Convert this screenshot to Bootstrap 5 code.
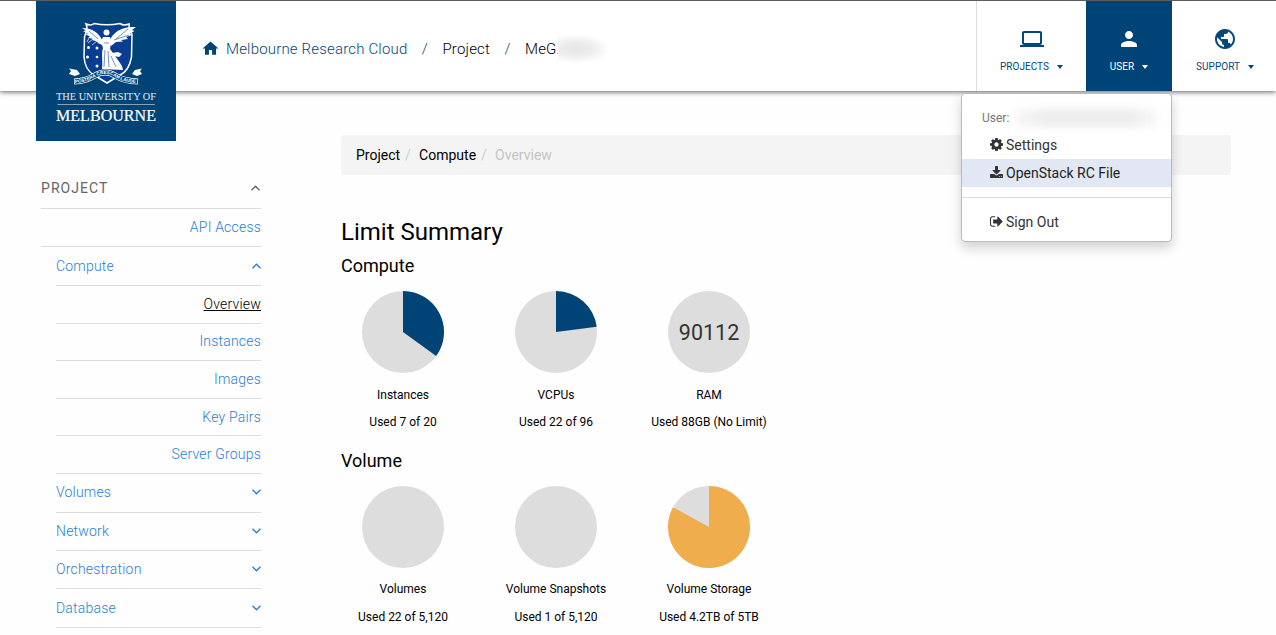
<!DOCTYPE html>
<html lang="en">
<head>
<meta charset="utf-8">
<meta name="viewport" content="width=device-width, initial-scale=1">
<title>Overview - Melbourne Research Cloud</title>
<link href="https://cdn.jsdelivr.net/npm/bootstrap@5.3.0/dist/css/bootstrap.min.css" rel="stylesheet">
<style>
  body { font-family: Roboto, "Liberation Sans", sans-serif; color: #000; background: #fefefe; height: 635px; overflow: hidden; font-size: 14px; line-height: 20px; }
  a { text-decoration: none; }
  .site-header { height: 91px; border-top: 1px solid #5c5c60; background: #fff; box-shadow: 0 1px 5px rgba(0,0,0,.62); z-index: 5; }
  .uni-logo { width: 140px; height: 140px; margin-left: 36px; background: #004477; }
  .trail { margin-left: 25px; height: 96px; font-size: 15px; font-weight: 300; letter-spacing: .18px; color: #000; }
  .trail a, .trail .sep { color: #04477b; }
  .trail a svg { margin-right: 6px; margin-bottom: 2px; }
  .trail .sep { width: 35px; text-align: center; }
  .redacted { display: inline-block; background: radial-gradient(ellipse 34px 15px at 18px 50%, #e6e6e6, #ececec 45%, #f8f8f8 80%, #fff); margin-left: -2px; }
  .redacted.wide { background: linear-gradient(90deg, #f8f8f8, #ededed 20%, #ededed 80%, #f8f8f8); filter: blur(4px); margin-left: 6px; }
  .tools { height: 90px; border-left: 1px solid #ddd; }
  .tool { color: #04477b; font-size: 10px; line-height: 14px; padding-top: 26px; letter-spacing: .03px; }
  .tool svg { fill: #04477b; }
  .tool span { margin-top: 9px; }
  .tool.current { background: #004477; color: #fff; }
  .tool.current svg { fill: #fff; }
  .caret { border: 3.5px solid transparent; border-top: 4px solid currentColor; border-bottom: 0; margin-left: 8px; }
  .user-menu { position: absolute; top: 92px; left: 961px; width: 211px; height: 149px; border: 1px solid #bbb; border-radius: 4px; background: #fff; box-shadow: 0 6px 12px rgba(0,0,0,.18); padding: 11px 0 0; }
  .user-menu .who { height: 26px; padding-left: 20px; font-size: 12px; line-height: 26px; color: #777; }
  .user-menu .entry { height: 28px; padding-left: 28px; color: #333; line-height: 28px; gap: 3px; }
  .user-menu .entry svg { fill: #333; width: 13px; height: 13px; margin-bottom: 1px; }
  .user-menu .picked { background: #e1e8f3; color: #222; }
  .user-menu .rule { height: 1px; background: #ddd; margin: 10px 0; }
  .side { width: 220px; margin-left: 41px; padding-top: 78px; font-size: 14px; font-weight: 300; letter-spacing: .2px; }
  .side a, .side .head { border-bottom: 1px solid #ddd; color: #2a7fd3; height: 38.45px; padding-bottom: 1px; }
  .side .head { height: 40px; color: #666; letter-spacing: 1.05px; font-weight: 400; }
  .side .head svg { margin-right: 1px; }
  .side .leaf { height: 37.65px; padding-bottom: 1px; }
  .side .sub { margin-left: 15px; }
  .side svg { fill: none; stroke: currentColor; stroke-width: 1.4; width: 9px; height: 6px; }
  .main-area { width: 890px; margin-left: 80px; padding-top: 44px; }
  .crumbs { height: 40px; background: #f4f4f4; border-radius: 4px; padding-left: 15px; }
  .crumbs .sep { color: #ccc; margin: 0 9px 0 5px; width: 5px; }
  .page-title { font-size: 24px; line-height: 28px; margin: 43px 0 0; font-weight: 400; }
  .group-title { font-size: 18px; line-height: 22px; margin: 9px 0 0; font-weight: 400; }
  .group-title.second { margin-top: 11px; }
  .gauge { width: 153px; padding-right: 29px; font-size: 12px; }
  .gauge svg { width: 82px; height: 82px; margin: 14px 1px 12px 0; }
  .gauge div { line-height: 20px; margin-bottom: 7px; white-space: nowrap; }
  .second + div .gauge svg { margin-bottom: 11px; }
  .second + div .gauge div { margin-bottom: 8px; }
</style>
</head>
<body>
<header class="site-header d-flex align-items-start position-relative">
  <a href="#" class="uni-logo flex-shrink-0">
    <svg width="140" height="140" viewBox="0 0 140 140">
      <path d="M50 23Q55 25 58 22.500Q71 25 84 22.500Q88 25 93 23Q93 29 96 33L95.500 56Q93 70 84 74L71 82L58 74Q49 69 48 56L48.500 36L50 31Q52 27 50 23Z" fill="#083d91" stroke="#fff" stroke-width="1.500"/>
      <g fill="#fff">
        <path d="M67 41C64 33 57 27 46 27L50 29.500 47 30 52 32.500 49 33 54 35.500 52 36.500 57 38 56 39 61 40.500 62 42 66 44Z"/>
        <path d="M73 41C77 30 87 25 100 26L96 29 98.500 30 94 32.500 96 34 90 36 92 38 85 39 87 40.500 80 41 75 45Z"/>
        <circle cx="70.500" cy="31.500" r="3"/>
        <path d="M67 36L74 36 75 42 74 48C78 53 82 59 86 65L87 69 66 68C67 59 65 52 67 47L65 41Z"/>
        <path d="M76 52L82 51 86 53 83 56 78 55Z"/>
        <circle cx="52.500" cy="46.500" r="1.500"/><circle cx="61" cy="47" r="1.500"/><circle cx="51.500" cy="56" r="1.500"/><circle cx="61" cy="56" r="1.300"/><circle cx="61" cy="65" r="1.500"/>
      </g>
      <path d="M69 49L68 66M72 50L73 66M75 55L80 66M62 38L53 30M80 38L92 28M78 39L93 34M68 42H73" stroke="#124b90" stroke-width=".6"/>
      <path d="M57 38L52 42M61 40L56 44M53 37L51 41" stroke="#dce8f4" stroke-width=".8" fill="none"/>
      <path d="M33 67.500L41 69 44 73 39 75 33 73 35 70ZM106 67.500L99 69 96 73 101 75 106 73 104 70Z" fill="#fff"/>
      <path d="M38 80.500Q50 80 58 75Q69 68 80 75Q88 80 102 80.500" fill="none" stroke="#fff" stroke-width="6"/>
      <path d="M38.700 80.500Q50 80 58 75Q69 68 80 75Q88 80 101.300 80.500" fill="none" stroke="#004477" stroke-width="4.600"/>
      <path id="mottoline" d="M39 82Q50 81.500 58 76.500Q69 69.500 80 76.500Q88 81.500 102 82" fill="none"/>
      <text font-family="Liberation Sans" font-size="4.500" font-weight="700" fill="#fff"><textPath href="#mottoline" textLength="64" lengthAdjust="spacingAndGlyphs">POSTERA CRESCAM LAUDE</textPath></text>
      <text x="20" y="98.500" font-family="Liberation Serif" font-size="10.500" fill="#e2edf5" textLength="100" lengthAdjust="spacingAndGlyphs">THE UNIVERSITY OF</text>
      <path d="M21.500 103.500H119" stroke="#7fa5c5" stroke-width="1"/>
      <text x="20" y="120" font-family="Liberation Serif" font-size="16.500" fill="#fff" stroke="#fff" stroke-width=".2" textLength="100" lengthAdjust="spacingAndGlyphs">MELBOURNE</text>
    </svg>
  </a>
  <nav class="trail d-flex align-items-center flex-grow-1">
    <a href="#" class="d-flex align-items-center"><svg width="19" height="19" viewBox="0 0 24 24" fill="#004477"><path d="M10 20v-6h4v6h5v-8h3L12 3 2 12h3v8z"/></svg>Melbourne Research Cloud</a>
    <span class="sep">/</span><span>Project</span><span class="sep">/</span><span>MeG.</span><span class="redacted" style="width:50px;height:34px"></span>
  </nav>
  <div class="tools d-flex">
    <a href="#" class="tool d-flex flex-column align-items-center" style="width:109px">
      <svg width="24" height="24" viewBox="0 0 24 24"><path d="M20 18c1.100 0 1.990-.9 1.990-2L22 6c0-1.100-.9-2-2-2H4c-1.100 0-2 .9-2 2v10c0 1.100.9 2 2 2H0v2h24v-2h-4zM4 6h16v10H4V6z"/></svg>
      <span class="d-flex align-items-center">PROJECTS<i class="caret"></i></span></a>
    <a href="#" class="tool current d-flex flex-column align-items-center" style="width:86px">
      <svg width="24" height="24" viewBox="0 0 24 24"><path d="M12 12c2.210 0 4-1.790 4-4s-1.790-4-4-4-4 1.790-4 4 1.790 4 4 4zm0 2c-2.670 0-8 1.340-8 4v2h16v-2c0-2.660-5.330-4-8-4z"/></svg>
      <span class="d-flex align-items-center">USER<i class="caret"></i></span></a>
    <a href="#" class="tool d-flex flex-column align-items-center" style="width:104px;padding-left:2px">
      <svg width="24" height="24" viewBox="0 0 24 24"><path d="M12 2C6.480 2 2 6.480 2 12s4.480 10 10 10 10-4.480 10-10S17.520 2 12 2zm-1 17.930c-3.950-.49-7-3.850-7-7.930 0-.62.08-1.210.21-1.790L9 15v1c0 1.100.9 2 2 2v1.930zm6.900-2.540c-.26-.81-1-1.390-1.900-1.390h-1v-3c0-.55-.45-1-1-1H8v-2h2c.55 0 1-.45 1-1V7h2c1.100 0 2-.9 2-2v-.41c2.930 1.190 5 4.060 5 7.410 0 2.080-.8 3.970-2.100 5.390z"/></svg>
      <span class="d-flex align-items-center">SUPPORT<i class="caret"></i></span></a>
  </div>
  <div class="user-menu">
    <div class="who d-flex align-items-center">User:<span class="redacted wide" style="width:142px;height:18px"></span></div>
    <a href="#" class="entry d-flex align-items-center"><svg viewBox="128 128 1536 1536"><path d="M1152 896q0-106-75-181t-181-75-181 75-75 181 75 181 181 75 181-75 75-181zm512-109v222q0 12-8 23t-20 13l-185 28q-19 54-39 91 35 50 107 138 10 12 10 25t-9 23q-27 37-99 108t-94 71q-12 0-26-9l-138-108q-44 23-91 38-16 136-29 186-7 28-36 28h-222q-14 0-24.500-8.500t-11.500-21.500l-28-184q-49-16-90-37l-141 107q-10 9-25 9-14 0-25-11-126-114-165-168-7-10-7-23 0-12 8-23 15-21 51-66.500t54-70.500q-27-50-41-99l-183-27q-13-2-21-12.500t-8-23.500v-222q0-12 8-23t19-13l186-28q14-46 39-92-40-57-107-138-10-12-10-24 0-10 9-23 26-36 98.500-107.500t94.500-71.500q13 0 26 10l138 107q44-23 91-38 16-136 29-186 7-28 36-28h222q14 0 24.500 8.500t11.500 21.500l28 184q49 16 90 37l142-107q9-9 24-9 13 0 25 10 129 119 165 170 7 8 7 22 0 12-8 23-15 21-51 66.500t-54 70.500q26 50 41 98l183 28q13 2 21 12.500t8 23.500z"/></svg>Settings</a>
    <a href="#" class="entry picked d-flex align-items-center"><svg viewBox="64 0 1664 1664"><path d="M1344 1344q0-26-19-45t-45-19-45 19-19 45 19 45 45 19 45-19 19-45zm256 0q0-26-19-45t-45-19-45 19-19 45 19 45 45 19 45-19 19-45zm128-224v320q0 40-28 68t-68 28h-1472q-40 0-68-28t-28-68v-320q0-40 28-68t68-28h465l135 136q58 56 136 56t136-56l136-136h464q40 0 68 28t28 68zm-325-569q17 41-14 70l-448 448q-18 19-45 19t-45-19l-448-448q-31-29-14-70 17-39 59-39h256v-448q0-26 19-45t45-19h256q26 0 45 19t19 45v448h256q42 0 59 39z"/></svg>OpenStack RC File</a>
    <div class="rule"></div>
    <a href="#" class="entry d-flex align-items-center"><svg viewBox="64 96 1600 1600"><path d="M704 1440q0 4 1 20t.5 26.500-3 23.500-10 19.500-20.500 6.500h-320q-119 0-203.500-84.500t-84.500-203.500v-704q0-119 84.500-203.500t203.500-84.500h320q13 0 22.500 9.500t9.500 22.500q0 4 1 20t.5 26.500-3 23.500-10 19.500-20.500 6.500h-320q-66 0-113 47t-47 113v704q0 66 47 113t113 47h312l11.500 1 11.500 3 8 5.500 7 9 2 13.500zm928-544q0 26-19 45l-544 544q-19 19-45 19t-45-19-19-45v-288h-448q-26 0-45-19t-19-45v-384q0-26 19-45t45-19h448v-288q0-26 19-45t45-19 45 19l544 544q19 19 19 45z"/></svg>Sign Out</a>
  </div>
</header>
<div class="d-flex align-items-start">
  <nav class="side flex-shrink-0">
    <div class="head d-flex align-items-center justify-content-between">PROJECT<svg viewBox="0 0 9 6"><path d="M.5 5.200 4.500 1.200 8.500 5.200"/></svg></div>
    <a href="#" class="d-flex align-items-center justify-content-end">API Access</a>
    <div class="sub">
      <a href="#" class="d-flex align-items-center justify-content-between">Compute<svg viewBox="0 0 9 6"><path d="M.5 5.200 4.500 1.200 8.500 5.200"/></svg></a>
      <a href="#" class="leaf d-flex align-items-center justify-content-end text-black"><u>Overview</u></a>
      <a href="#" class="leaf d-flex align-items-center justify-content-end">Instances</a>
      <a href="#" class="leaf d-flex align-items-center justify-content-end">Images</a>
      <a href="#" class="leaf d-flex align-items-center justify-content-end">Key Pairs</a>
      <a href="#" class="leaf d-flex align-items-center justify-content-end">Server Groups</a>
      <a href="#" class="d-flex align-items-center justify-content-between">Volumes<svg viewBox="0 0 9 6"><path d="M.5 .8 4.500 4.800 8.500 .8"/></svg></a>
      <a href="#" class="d-flex align-items-center justify-content-between">Network<svg viewBox="0 0 9 6"><path d="M.5 .8 4.500 4.800 8.500 .8"/></svg></a>
      <a href="#" class="d-flex align-items-center justify-content-between">Orchestration<svg viewBox="0 0 9 6"><path d="M.5 .8 4.500 4.800 8.500 .8"/></svg></a>
      <a href="#" class="d-flex align-items-center justify-content-between">Database<svg viewBox="0 0 9 6"><path d="M.5 .8 4.500 4.800 8.500 .8"/></svg></a>
    </div>
  </nav>
  <main class="main-area">
    <div class="crumbs d-flex align-items-center"><span>Project</span><span class="sep">/</span><span>Compute</span><span class="sep">/</span><span style="color:#c4c4c4">Overview</span></div>
    <h1 class="page-title">Limit Summary</h1>
    <h2 class="group-title">Compute</h2>
    <div class="d-flex text-center">
      <div class="gauge d-flex flex-column align-items-center"><svg viewBox="-41 -41 82 82"><circle r="41" fill="#ddd"/><path d="M0 0V-41A41 41 0 0 1 33.170 24.100Z" fill="#004477"/></svg><div>Instances</div><div>Used 7 of 20</div></div>
      <div class="gauge d-flex flex-column align-items-center"><svg viewBox="-41 -41 82 82"><circle r="41" fill="#ddd"/><path d="M0 0V-41A41 41 0 0 1 40.680 -5.140Z" fill="#004477"/></svg><div>VCPUs</div><div>Used 22 of 96</div></div>
      <div class="gauge d-flex flex-column align-items-center"><svg viewBox="-41 -41 82 82"><circle r="41" fill="#ddd"/><text y="8" text-anchor="middle" font-size="21.500" fill="#333">90112</text></svg><div>RAM</div><div>Used 88GB (No Limit)</div></div>
    </div>
    <h2 class="group-title second">Volume</h2>
    <div class="d-flex text-center">
      <div class="gauge d-flex flex-column align-items-center"><svg viewBox="-41 -41 82 82"><circle r="41" fill="#ddd"/></svg><div>Volumes</div><div>Used 22 of 5,120</div></div>
      <div class="gauge d-flex flex-column align-items-center"><svg viewBox="-41 -41 82 82"><circle r="41" fill="#ddd"/></svg><div>Volume Snapshots</div><div>Used 1 of 5,120</div></div>
      <div class="gauge d-flex flex-column align-items-center"><svg viewBox="-41 -41 82 82"><circle r="41" fill="#ddd"/><path d="M0 0V-41A41 41 0 1 1 -35.930 -19.750Z" fill="#f0ad4e"/></svg><div>Volume Storage</div><div>Used 4.2TB of 5TB</div></div>
    </div>
  </main>
</div>
<script src="https://cdn.jsdelivr.net/npm/bootstrap@5.3.0/dist/js/bootstrap.bundle.min.js"></script>
</body>
</html>
